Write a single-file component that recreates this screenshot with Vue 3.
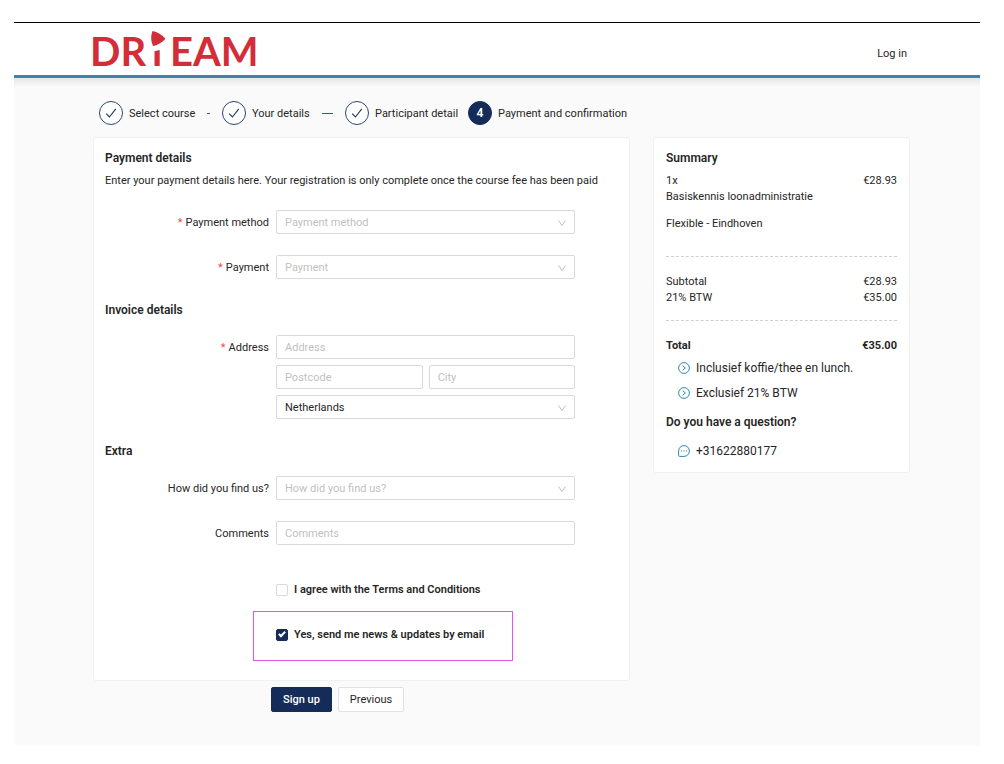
<script setup>
import { ref } from 'vue'

const doneSteps = ['Select course', 'Your details', 'Participant detail']
const inclusions = ['Inclusief koffie/thee en lunch.', 'Exclusief 21% BTW']

const method = ref('')
const payment = ref('')
const country = ref('nl')
const source = ref('')
const terms = ref(false)
const news = ref(true)
</script>

<template>
  <div class="page">
    <header class="header">
      <a class="brand" href="#" aria-label="DRIEAM">
        <svg width="166" height="40" viewBox="0 0 166 40" fill="currentColor">
          <text x="-3" y="37" class="brand-text">DR</text>
          <path d="M59.500 2C64.500 3 69 6 72.500 9.700C69 13.500 64.500 16.300 60 17C57.800 12 57.500 7 59.500 2Z" />
          <path d="M61.500 22.200L66.700 21V37H61.500Z" />
          <text x="77" y="37" class="brand-text">EAM</text>
        </svg>
      </a>
      <a class="login" href="#">Log in</a>
    </header>

    <main class="main">
      <ol class="steps">
        <li v-for="step in doneSteps" :key="step" class="step">
          <span class="dot">
            <svg width="12" height="12" viewBox="0 0 12 12" fill="none" stroke="currentColor" stroke-width="1.1">
              <path d="M1.200 6.600L4.400 10L10.800 1.800" />
            </svg>
          </span>
          <span class="step-label">{{ step }}</span>
          <span class="step-line"></span>
        </li>
        <li class="step current" aria-current="step">
          <span class="dot">4</span>
          <span class="step-label">Payment and confirmation</span>
        </li>
      </ol>

      <div class="columns">
        <form class="form" @submit.prevent>
          <div class="card form-card">
            <h2>Payment details</h2>
            <p class="intro">Enter your payment details here. Your registration is only complete once the course fee has been paid</p>

            <div class="fields first">
              <label class="label required" for="method">Payment method</label>
              <div class="select">
                <select id="method" v-model="method" :class="{ empty: !method }">
                  <option value="" disabled>Payment method</option>
                </select>
                <svg class="caret" viewBox="0 0 10 10"><path d="M1.500 2.500L5 7.500L8.500 2.500" /></svg>
              </div>
              <label class="label required" for="payment">Payment</label>
              <div class="select">
                <select id="payment" v-model="payment" :class="{ empty: !payment }">
                  <option value="" disabled>Payment</option>
                </select>
                <svg class="caret" viewBox="0 0 10 10"><path d="M1.500 2.500L5 7.500L8.500 2.500" /></svg>
              </div>
            </div>

            <h2 class="section invoice">Invoice details</h2>
            <div class="fields">
              <label class="label required" for="address">Address</label>
              <div class="address">
                <input id="address" class="wide" type="text" placeholder="Address" />
                <input type="text" placeholder="Postcode" aria-label="Postcode" />
                <input type="text" placeholder="City" aria-label="City" />
                <div class="select wide">
                  <select v-model="country" aria-label="Country">
                    <option value="nl">Netherlands</option>
                  </select>
                  <svg class="caret" viewBox="0 0 10 10"><path d="M1.500 2.500L5 7.500L8.500 2.500" /></svg>
                </div>
              </div>
            </div>

            <h2 class="section">Extra</h2>
            <div class="fields">
              <label class="label" for="source">How did you find us?</label>
              <div class="select">
                <select id="source" v-model="source" :class="{ empty: !source }">
                  <option value="" disabled>How did you find us?</option>
                </select>
                <svg class="caret" viewBox="0 0 10 10"><path d="M1.500 2.500L5 7.500L8.500 2.500" /></svg>
              </div>
              <label class="label" for="comments">Comments</label>
              <input id="comments" type="text" placeholder="Comments" />
            </div>

            <div class="fields checks">
              <label class="check"><input v-model="terms" type="checkbox" />I agree with the Terms and Conditions</label>
              <label class="check marked"><input v-model="news" type="checkbox" />Yes, send me news &amp; updates by email</label>
            </div>
          </div>

          <div class="actions">
            <button class="primary" type="submit">Sign up</button>
            <button type="button">Previous</button>
          </div>
        </form>

        <aside class="card summary">
          <h2>Summary</h2>
          <div class="rows">
            <div class="row"><span>1x<br />Basiskennis loonadministratie</span><span>€28.93</span></div>
            <p class="place">Flexible - Eindhoven</p>
          </div>
          <div class="rows tax">
            <div class="row"><span>Subtotal</span><span>€28.93</span></div>
            <div class="row"><span>21% BTW</span><span>€35.00</span></div>
          </div>
          <div class="row total"><span>Total</span><span>€35.00</span></div>
          <ul class="notes">
            <li v-for="item in inclusions" :key="item">
              <svg class="note-icon" viewBox="0 0 12 12"><circle cx="6" cy="6" r="5.400" /><path d="M4.700 3.700L7.400 6L4.700 8.300" /></svg>
              {{ item }}
            </li>
          </ul>
          <h2>Do you have a question?</h2>
          <ul class="notes phone">
            <li>
              <svg class="note-icon" viewBox="0 0 12 12">
                <path d="M.6 10.500V6A5.400 5.400 0 1 1 6 11.400H1.500A.9 .9 0 0 1 .6 10.500Z" />
                <path d="M2.900 6h1.200M5.400 6h1.200M7.900 6h1.200" stroke-width="1.200" />
              </svg>
              +31622880177
            </li>
          </ul>
        </aside>
      </div>
    </main>
  </div>
</template>

<style>
body {
  margin: 0;
  background: #fff;
}
</style>

<style scoped>
.page {
  margin: 22px 24px 0 14px;
  border-top: 1px solid #000;
  color: #262626;
  font: 11px/16px Roboto, "Liberation Sans", sans-serif;
}
h2, p, ul, ol {
  margin: 0;
  padding: 0;
  list-style: none;
}
h2 {
  font-size: 12px;
  line-height: 20px;
  font-weight: 600;
}
.header {
  display: flex;
  align-items: center;
  justify-content: space-between;
  height: 52px;
  padding: 0 73px 0 79px;
  border-bottom: 3px solid #4382a5;
  background: #fff;
}
.brand {
  display: flex;
  color: #d32d3a;
}
.brand svg {
  overflow: visible;
}
.brand-text {
  font: 700 40px Lato, sans-serif;
}
.login {
  margin-top: 10px;
  color: inherit;
  text-decoration: none;
}
.main {
  padding: 23px 70px 33px 79px;
  background: linear-gradient(#e6e6e6, #fafafa 9px);
}
.steps {
  display: grid;
  grid-template-columns: 123px 123px 123px auto;
  padding-left: 6px;
}
.step {
  display: flex;
  align-items: center;
  min-width: 0;
  margin-right: 12px;
}
.dot {
  flex: none;
  display: flex;
  align-items: center;
  justify-content: center;
  box-sizing: border-box;
  width: 24px;
  height: 24px;
  margin-right: 6px;
  border: 1px solid #294673;
  border-radius: 50%;
  background: #fff;
  color: #1b365f;
}
.current .dot {
  border-color: #152c59;
  background: #152c59;
  color: #fff;
  font-size: 12px;
  font-weight: 600;
}
.step-label {
  flex: none;
  padding-top: 2px;
  white-space: nowrap;
}
.step-line {
  flex: 1;
  height: 1px;
  margin-left: 12px;
  background: #3f557e;
}
.columns {
  display: grid;
  grid-template-columns: minmax(0, 1fr) 257px;
  align-items: start;
  gap: 23px;
  margin-top: 12px;
}
.card {
  border: 1px solid #f0f0f0;
  border-radius: 3px;
  background: #fff;
}
.form-card {
  padding: 10px 11px 33px;
}
.summary {
  padding: 10px 12px 11px;
}
.intro {
  margin-top: 3px;
  line-height: 20px;
}
.fields {
  display: grid;
  grid-template-columns: 8fr 14fr 2fr;
  row-gap: 20px;
  margin-top: 15px;
}
.fields > * {
  min-width: 0;
}
.fields.first {
  margin-top: 19px;
}
.section {
  margin-top: 22px;
}
.section.invoice {
  margin-top: 20px;
}
.label {
  grid-column: 1;
  padding: 1px 7px 0 0;
  line-height: 24px;
  text-align: right;
}
.required::before {
  content: "*";
  margin-right: 3px;
  color: #f5484a;
}
.fields > .select,
.fields > input,
.address,
.check {
  grid-column: 2;
}
.address {
  display: grid;
  grid-template-columns: 1fr 1fr;
  gap: 6px;
}
.wide {
  grid-column: 1 / -1;
}
.select {
  position: relative;
}
select,
input[type="text"] {
  display: block;
  box-sizing: border-box;
  width: 100%;
  min-width: 0;
  height: 24px;
  margin: 0;
  padding: 1px 8px 0;
  border: 1px solid #d9d9d9;
  border-radius: 2px;
  background: #fff;
  color: inherit;
  font: inherit;
  appearance: none;
}
select.empty,
input::placeholder {
  color: #bfbfbf;
  opacity: 1;
}
.caret {
  position: absolute;
  top: 8px;
  right: 8px;
  width: 10px;
  height: 10px;
  fill: none;
  stroke: #bfbfbf;
  pointer-events: none;
}
.checks {
  margin-top: 31px;
}
.check {
  position: relative;
  justify-self: start;
  display: flex;
  align-items: center;
  gap: 6px;
  line-height: 25px;
  font-weight: 600;
  white-space: nowrap;
}
.check input {
  appearance: none;
  box-sizing: border-box;
  width: 12px;
  height: 12px;
  margin: 0;
  border: 1px solid #d9d9d9;
  border-radius: 2px;
  background: #fff;
}
.check input:checked {
  display: flex;
  align-items: center;
  justify-content: center;
  border-color: #152c59;
  background: #152c59;
}
.check input:checked::after {
  content: "";
  width: 2px;
  height: 5px;
  margin-bottom: 2px;
  border: solid #fff;
  border-width: 0 2px 2px 0;
  transform: rotate(45deg);
}
.marked::before {
  content: "";
  position: absolute;
  inset: -11px -29px -14px -23px;
  border: 1px solid #e254ee;
  pointer-events: none;
}
.actions {
  display: flex;
  gap: 6px;
  margin: 6px 0 0 178px;
}
button {
  height: 25px;
  padding: 0 11px;
  border: 1px solid #e0e0e0;
  border-radius: 2px;
  background: #fff;
  color: inherit;
  font: inherit;
}
.primary {
  border-color: #152c59;
  background: #152c59;
  color: #fff;
  font-weight: 500;
}
.row {
  display: flex;
  justify-content: space-between;
}
.rows {
  margin-top: 5px;
  padding-bottom: 24px;
  border-bottom: 1px dashed #cfcfcf;
}
.place {
  margin-top: 11px;
}
.rows.tax {
  margin-top: 17px;
  padding-bottom: 14px;
}
.total {
  margin-top: 17px;
  font-weight: 700;
}
.notes {
  display: grid;
  gap: 5px;
  margin: 4px 0 9px 12px;
  font-size: 12px;
  line-height: 20px;
}
.notes li {
  display: flex;
  align-items: center;
  gap: 6px;
}
.phone {
  margin: 9px 0 0 12px;
}
.note-icon {
  width: 12px;
  height: 12px;
  fill: none;
  stroke: #3388b0;
}
</style>
